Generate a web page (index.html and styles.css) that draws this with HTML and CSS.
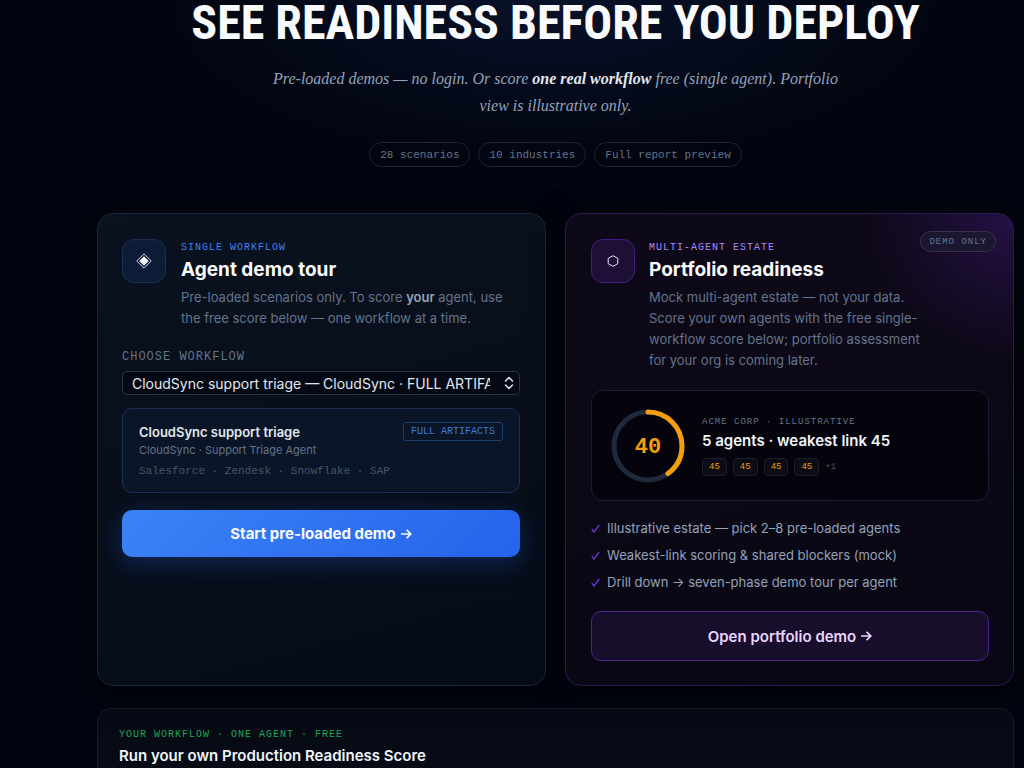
FILE: index.html
```html
<!DOCTYPE html>
<html lang="en">
<head>
    <meta charset="UTF-8">
    <meta name="viewport" content="width=device-width, initial-scale=1.0">
    <title>See readiness before you deploy</title>
    <link rel="stylesheet" href="styles.css">
</head>
<body>
    <main class="page">
        <header class="hero">
            <h1>SEE READINESS BEFORE YOU DEPLOY</h1>
            <p class="lead">Pre-loaded demos — no login. Or score <strong>one real workflow</strong> free (single agent). Portfolio view is illustrative only.</p>
            <ul class="stats">
                <li>28 scenarios</li>
                <li>10 industries</li>
                <li>Full report preview</li>
            </ul>
        </header>

        <div class="cards">
            <section class="card card-single">
                <div class="card-head">
                    <div class="card-icon">
                        <svg width="16" height="16" viewBox="0 0 16 16" aria-hidden="true">
                            <path d="M8 .8 15.2 8 8 15.2.8 8Z" fill="none" stroke="#e2e8f0" stroke-width=".9"/>
                            <path d="M8 3.2 12.8 8 8 12.8 3.2 8Z" fill="#f1f5f9"/>
                        </svg>
                    </div>
                    <div class="card-intro">
                        <p class="eyebrow">SINGLE WORKFLOW</p>
                        <h2>Agent demo tour</h2>
                        <p class="desc">Pre-loaded scenarios only. To score <strong>your</strong> agent, use the free score below — one workflow at a time.</p>
                    </div>
                </div>

                <label class="field-label" for="workflow">CHOOSE WORKFLOW</label>
                <div class="select-wrap">
                    <select id="workflow">
                        <option>CloudSync support triage — CloudSync · FULL ARTIFACTS</option>
                    </select>
                    <svg class="select-arrows" width="10" height="14" viewBox="0 0 10 14" aria-hidden="true">
                        <path d="M1.5 5 5 1.5 8.5 5M1.5 9 5 12.5 8.5 9" fill="none" stroke="#e2e8f0" stroke-width="1.5" stroke-linecap="round" stroke-linejoin="round"/>
                    </svg>
                </div>

                <div class="preview">
                    <div class="preview-top">
                        <h3>CloudSync support triage</h3>
                        <span class="tag">FULL ARTIFACTS</span>
                    </div>
                    <p class="preview-org">CloudSync · Support Triage Agent</p>
                    <p class="preview-tools">Salesforce · Zendesk · Snowflake · SAP</p>
                </div>

                <button class="btn btn-primary" type="button">Start pre-loaded demo
                    <svg width="12" height="12" viewBox="0 0 12 12" aria-hidden="true"><path d="M1 6h9.6M6.6 1.8 10.8 6 6.6 10.2" fill="none" stroke="currentColor" stroke-width="1.7"/></svg>
                </button>
            </section>

            <section class="card card-estate">
                <span class="demo-badge">DEMO ONLY</span>
                <div class="card-head">
                    <div class="card-icon">
                        <svg width="12" height="12" viewBox="0 0 12 12" aria-hidden="true">
                            <path d="M6 .7 10.8 3.3V8.7L6 11.3 1.2 8.7V3.3Z" fill="none" stroke="#e9e4f5" stroke-width="1"/>
                        </svg>
                    </div>
                    <div class="card-intro">
                        <p class="eyebrow">MULTI-AGENT ESTATE</p>
                        <h2>Portfolio readiness</h2>
                        <p class="desc">Mock multi-agent estate — not your data. Score your own agents with the free single-workflow score below; portfolio assessment for your org is coming later.</p>
                    </div>
                </div>

                <div class="estate">
                    <div class="ring">
                        <svg width="74" height="74" viewBox="0 0 74 74" aria-hidden="true">
                            <circle cx="37" cy="37" r="34" fill="none" stroke="#1e293b" stroke-width="5"/>
                            <circle cx="37" cy="37" r="34" fill="none" stroke="#f59e0b" stroke-width="5" stroke-linecap="round" pathLength="100" stroke-dasharray="40 100" transform="rotate(-90 37 37)"/>
                        </svg>
                        <span class="ring-score">40</span>
                    </div>
                    <div>
                        <p class="estate-label">ACME CORP · ILLUSTRATIVE</p>
                        <h3>5 agents · weakest link 45</h3>
                        <div class="scores">
                            <span class="score">45</span>
                            <span class="score">45</span>
                            <span class="score">45</span>
                            <span class="score">45</span>
                            <span class="more">+1</span>
                        </div>
                    </div>
                </div>

                <ul class="features">
                    <li><svg width="9" height="9" viewBox="0 0 9 9" aria-hidden="true"><path d="M.8 5.2 3 8 8.2.8" fill="none" stroke="#7c3aed" stroke-width="1.2"/></svg>Illustrative estate — pick 2–8 pre-loaded agents</li>
                    <li><svg width="9" height="9" viewBox="0 0 9 9" aria-hidden="true"><path d="M.8 5.2 3 8 8.2.8" fill="none" stroke="#7c3aed" stroke-width="1.2"/></svg>Weakest-link scoring &amp; shared blockers (mock)</li>
                    <li><svg width="9" height="9" viewBox="0 0 9 9" aria-hidden="true"><path d="M.8 5.2 3 8 8.2.8" fill="none" stroke="#7c3aed" stroke-width="1.2"/></svg>Drill down → seven-phase demo tour per agent</li>
                </ul>

                <button class="btn btn-outline" type="button">Open portfolio demo
                    <svg width="12" height="12" viewBox="0 0 12 12" aria-hidden="true"><path d="M1 6h9.6M6.6 1.8 10.8 6 6.6 10.2" fill="none" stroke="currentColor" stroke-width="1.7"/></svg>
                </button>
            </section>
        </div>

        <section class="own">
            <p class="eyebrow">YOUR WORKFLOW · ONE AGENT · FREE</p>
            <h2>Run your own Production Readiness Score</h2>
        </section>
    </main>
</body>
</html>
```
FILE: styles.css
```css
* {
    margin: 0;
    padding: 0;
    box-sizing: border-box;
}

body {
    background: #02050f;
    color: #f8fafc;
    font-family: Inter, "Liberation Sans", sans-serif;
    font-size: 14px;
}

ul {
    list-style: none;
}

.page {
    height: 100vh;
    overflow: hidden;
    padding: 0 10px 0 97px;
    background: radial-gradient(ellipse 400px 170px at 54% 0, #081129, rgba(8, 17, 41, 0));
}

/* hero */
.hero {
    display: flex;
    flex-direction: column;
    align-items: center;
    text-align: center;
}

.hero h1 {
    font-family: "Roboto Condensed", Roboto, sans-serif;
    font-size: 48px;
    font-weight: 700;
    line-height: 46px;
    white-space: nowrap;
}

.lead {
    max-width: 580px;
    margin-top: 19px;
    font-family: "Liberation Serif", serif;
    font-size: 16px;
    font-style: italic;
    line-height: 27px;
    color: #94a3b8;
}

.lead strong {
    color: #e2e8f0;
}

.stats {
    display: flex;
    gap: 8px;
    margin-top: 23px;
}

.stats li {
    padding: 1px 10px 0;
    border: 1px solid #1c2535;
    border-radius: 13px;
    font-family: "Liberation Mono", monospace;
    font-size: 11px;
    line-height: 22px;
    color: #64748b;
}

/* cards */
.cards {
    display: grid;
    grid-template-columns: 1fr 1fr;
    gap: 19px;
    margin-top: 46px;
}

.card {
    position: relative;
    display: flex;
    flex-direction: column;
    padding: 25px 25px 24px 24px;
    border: 1px solid #1a2535;
    border-radius: 16px;
    box-shadow: 0 8px 32px rgba(0, 0, 0, .5);
}

.card-single {
    background: linear-gradient(165deg, #0a121f, #060c17);
}

.card-estate {
    padding: 25px 24px 24px 25px;
    border-color: #2c1a52;
    background: radial-gradient(circle at 100% 0, #251044, rgba(37, 16, 68, 0) 150px), linear-gradient(165deg, #0e0918, #090714);
}

.card-head {
    display: flex;
    gap: 15px;
}

.card-estate .card-head {
    gap: 14px;
}

.card-icon {
    display: flex;
    flex: none;
    align-items: center;
    justify-content: center;
    width: 44px;
    height: 44px;
    border: 1px solid #1c2d4d;
    border-radius: 12px;
    background: #0d1b36;
}

.card-estate .card-icon {
    border-color: #431d80;
    background: #1d0f36;
}

.eyebrow {
    font-family: "Liberation Mono", monospace;
    font-size: 10px;
    letter-spacing: 1px;
    line-height: 18px;
    color: #3b82f6;
}

.card-estate .eyebrow {
    color: #a78bfa;
}

.card-intro h2 {
    font-size: 19px;
    font-weight: 700;
    line-height: 26px;
}

.desc {
    margin-top: 4px;
    font-size: 13px;
    line-height: 21px;
    color: #64748b;
}

.desc strong {
    font-weight: 600;
    color: #94a3b8;
}

.card-estate .desc {
    max-width: 282px;
}

.field-label {
    margin-top: 20px;
    font-family: "Liberation Mono", monospace;
    font-size: 12px;
    letter-spacing: 1px;
    line-height: 16px;
    color: #64748b;
}

.select-wrap {
    position: relative;
    margin-top: 6px;
}

.select-wrap select {
    display: block;
    width: 100%;
    height: 24px;
    padding: 0 29px 0 9px;
    border: 1px solid #2c3442;
    border-radius: 5px;
    background: #040914;
    color: #e2e8f0;
    font-family: inherit;
    font-size: 14px;
    appearance: none;
}

.select-arrows {
    position: absolute;
    top: 5px;
    right: 6px;
    pointer-events: none;
}

.preview {
    margin-top: 13px;
    padding: 13px 16px 12px;
    border: 1px solid #1c3054;
    border-radius: 10px;
    background: #0a1527;
}

.preview-top {
    display: flex;
    align-items: center;
    justify-content: space-between;
}

.preview h3 {
    font-size: 13px;
    font-weight: 600;
    line-height: 18px;
    color: #e2e8f0;
}

.tag {
    padding: 1px 7px 0;
    border: 1px solid #1d3c70;
    border-radius: 3px;
    font-family: "Liberation Mono", monospace;
    font-size: 10px;
    line-height: 16px;
    color: #3f7bdc;
}

.preview-org {
    font-size: 11px;
    line-height: 18px;
    color: #64748b;
}

.preview-tools {
    margin-top: 3px;
    font-family: "Liberation Mono", monospace;
    font-size: 11px;
    line-height: 18px;
    color: #475569;
}

.btn {
    display: flex;
    align-items: center;
    justify-content: center;
    gap: 4px;
    width: 100%;
    border: none;
    border-radius: 10px;
    font-family: inherit;
    font-size: 15px;
    font-weight: 600;
    cursor: pointer;
}

.btn-primary {
    height: 47px;
    margin-top: 17px;
    background: linear-gradient(135deg, #3b82f6, #2563eb);
    box-shadow: 0 6px 24px rgba(37, 99, 235, .3);
    color: #f8fafc;
    font-weight: 700;
}

.btn-outline {
    height: 50px;
    margin-top: auto;
    border: 1px solid #4c2390;
    background: #180d2b;
    color: #e9d5ff;
}

.demo-badge {
    position: absolute;
    top: 17px;
    right: 17px;
    padding: 1px 8px 0;
    border: 1px solid #353347;
    border-radius: 11px;
    background: #1c1730;
    font-family: "Liberation Mono", monospace;
    font-size: 9px;
    letter-spacing: 1px;
    line-height: 18px;
    color: #64748b;
}

.estate {
    display: flex;
    align-items: center;
    gap: 17px;
    height: 111px;
    margin-top: 19px;
    padding: 0 19px;
    border: 1px solid #21193a;
    border-radius: 12px;
    background: #05040c;
}

.ring {
    display: grid;
    place-items: center;
}

.ring svg,
.ring-score {
    grid-area: 1 / 1;
}

.ring-score {
    padding-top: 4px;
    font-family: "Liberation Mono", monospace;
    font-size: 22px;
    font-weight: 700;
    color: #f59e0b;
}

.estate-label {
    font-family: "Liberation Mono", monospace;
    font-size: 9px;
    letter-spacing: 1px;
    line-height: 14px;
    color: #64748b;
}

.estate h3 {
    margin-top: 2px;
    font-size: 15px;
    font-weight: 600;
    line-height: 20px;
    color: #f1f5f9;
}

.scores {
    display: flex;
    align-items: center;
    gap: 6px;
    margin-top: 7px;
    font-family: "Liberation Mono", monospace;
    font-size: 9px;
    line-height: 16px;
    color: #f59e0b;
}

.score {
    padding: 0 6px;
    border: 1px solid #1b1f2c;
    border-radius: 4px;
    background: #0b0c15;
}

.more {
    color: #475569;
}

.features {
    display: flex;
    flex-direction: column;
    gap: 6px;
    margin: 17px 0 18px;
    font-size: 13px;
    line-height: 21px;
    color: #94a3b8;
}

.features li {
    display: flex;
    align-items: center;
    gap: 7px;
}

/* free score */
.own {
    min-height: 140px;
    margin-top: 22px;
    padding: 17px 21px;
    border: 1px solid #151d2b;
    border-radius: 14px;
    background: #060b16;
}

.own .eyebrow {
    color: #22a559;
}

.own h2 {
    font-size: 15px;
    font-weight: 600;
    line-height: 24px;
    color: #f1f5f9;
}
```
